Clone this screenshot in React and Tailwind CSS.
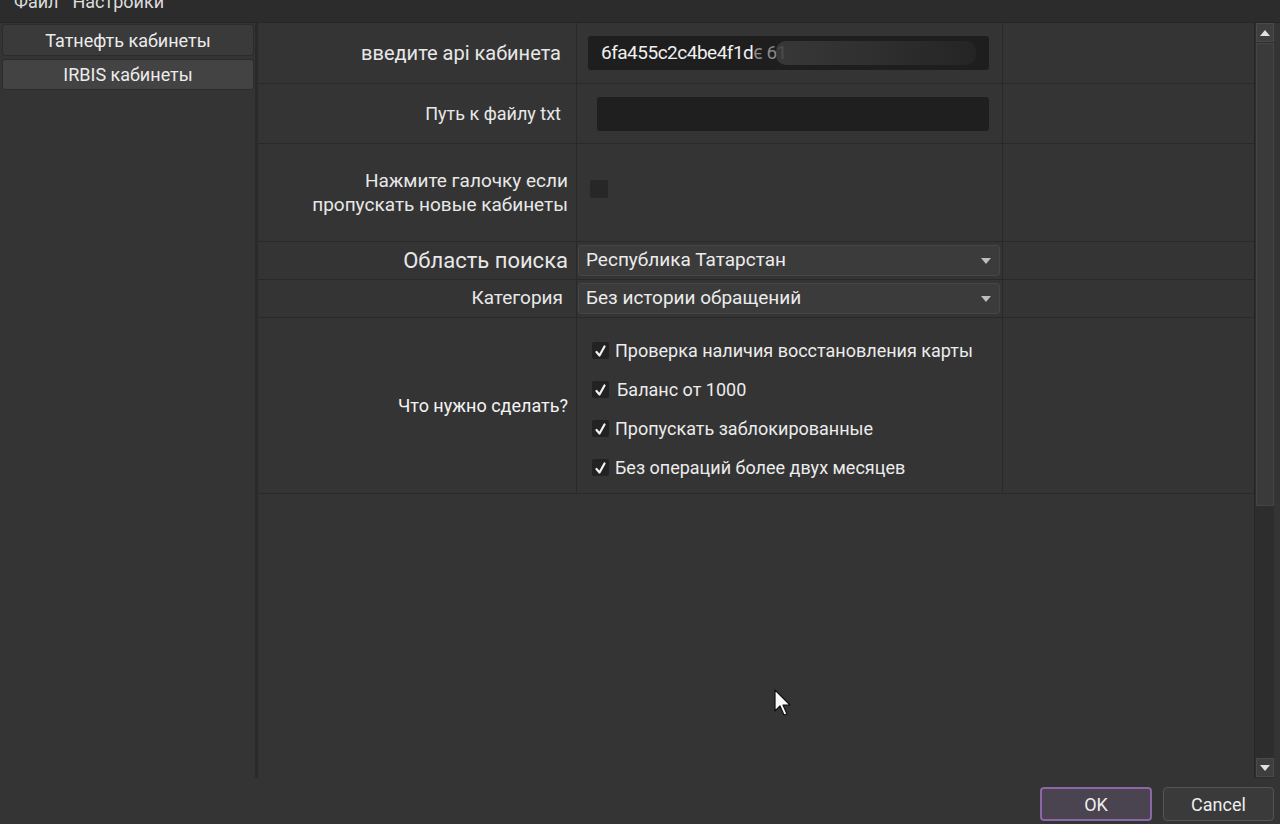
import React from 'react';

const font = { fontFamily: 'Roboto, "Noto Sans", sans-serif' };

function Check() {
  return (
    <span className="w-[17px] h-[17px] bg-[#222] rounded-[2px] flex items-center justify-center shrink-0">
      <svg width="11" height="12" viewBox="0 0 11 12">
        <path d="M1.5 7 L4.5 10.5 L9.5 1.5" fill="none" stroke="#f2f2f2" strokeWidth="2.2" strokeLinecap="round" strokeLinejoin="round" />
      </svg>
    </span>
  );
}

function Combo({ text }) {
  return (
    <div className="w-[422px] h-[31px] bg-[#3b3b3b] border border-[#464646] rounded-[3px] flex items-center justify-between pl-[7px] pr-[8px] text-[19px] text-[#ececec]">
      <span>{text}</span>
      <svg width="10" height="6" viewBox="0 0 10 6"><path d="M0 0 L10 0 L5 6 Z" fill="#bdbdbd" /></svg>
    </div>
  );
}

function Row({ h, label, children, align = 'items-center' }) {
  return (
    <div className={`flex ${h} border-b border-[#292929]`}>
      <div className="w-[319px] shrink-0 border-r border-[#292929] flex items-center justify-end pr-[8px] text-right text-[#e8e8e8]">
        {label}
      </div>
      <div className={`w-[426px] shrink-0 border-r border-[#292929] flex ${align}`}>{children}</div>
      <div className="flex-1" />
    </div>
  );
}

export default function App() {
  return (
    <div className="w-[1280px] h-[824px] bg-[#343434] flex flex-col overflow-hidden relative" style={font}>
      <div className="h-[23px] bg-[#2c2c2c] border-b border-[#262626] flex items-start gap-[14px] pl-[14px] text-[18px] leading-[22px] text-[#dcdcdc] overflow-hidden">
        <span className="-mt-[9px]">Файл</span>
        <span className="-mt-[9px]">Настройки</span>
      </div>

      <div className="flex h-[755px]">
        <div className="w-[258px] shrink-0 pl-[2px] pr-[1px] pt-[1px] flex flex-col gap-[3px] border-r-[3px] border-[#2a2a2a]">
          <div className="h-[32px] bg-[#3a3a3a] border border-[#2b2b2b] rounded-[3px] flex items-center justify-center text-[18px] text-[#ececec]">Татнефть кабинеты</div>
          <div className="h-[31px] bg-[#434343] border border-[#2b2b2b] rounded-[3px] flex items-center justify-center text-[18px] text-[#ececec]">IRBIS кабинеты</div>
        </div>

        <div className="flex-1 flex flex-col">
          <Row h="h-[61px]" label={<span className="text-[20px] pr-[7px]">введите api кабинета</span>}>
            <div className="ml-[11px] w-[401px] h-[34px] bg-[#1e1e1e] rounded-[3px] flex items-center pl-[13px] text-[19px] tracking-[-0.5px] text-[#f0f0f0] relative overflow-hidden">
              <span>6fa455c2c4be4f1d</span>
              <span className="text-[#8a8a8a]">ϵ 61</span>
              <span className="absolute left-[188px] top-[5px] w-[200px] h-[24px] bg-gradient-to-r from-[#3e3e3e] via-[#333] to-[#262626] rounded-[10px] opacity-80" />
            </div>
          </Row>
          <Row h="h-[60px]" label={<span className="text-[18px] pr-[7px]">Путь к файлу txt</span>}>
            <div className="ml-[20px] w-[392px] h-[34px] bg-[#1f1f1f] rounded-[3px]" />
          </Row>
          <Row h="h-[98px]" label={<span className="text-[19px] leading-[24px]">Нажмите галочку если<br />пропускать новые кабинеты</span>}>
            <div className="ml-[13px] -mt-[8px] w-[18px] h-[18px] bg-[#272727] rounded-[2px]" />
          </Row>
          <Row h="h-[38px]" label={<span className="text-[22px]">Область поиска</span>}>
            <div className="ml-[1px]"><Combo text="Республика Татарстан" /></div>
          </Row>
          <Row h="h-[38px]" label={<span className="text-[19px] pr-[5px]">Категория</span>}>
            <div className="ml-[1px]"><Combo text="Без истории обращений" /></div>
          </Row>
          <Row h="h-[176px]" align="items-start" label={<span className="text-[18px] text-[#f4f4f4]">Что нужно сделать?</span>}>
            <div className="ml-[15px] flex flex-col gap-[18px] pt-[22px] text-[18px] leading-[21px] text-[#ececec]">
              <div className="flex items-center gap-[6px]"><Check /><span>Проверка наличия восстановления карты</span></div>
              <div className="flex items-center gap-[8px]"><Check /><span>Баланс от 1000</span></div>
              <div className="flex items-center gap-[6px]"><Check /><span>Пропускать заблокированные</span></div>
              <div className="flex items-center gap-[6px]"><Check /><span>Без операций более двух месяцев</span></div>
            </div>
          </Row>
          <div className="flex-1" />
        </div>

        <div className="w-[20px] mr-[6px] shrink-0 bg-[#2d2d2d] border-l border-[#262626] flex flex-col items-center pb-[1px]">
          <div className="w-[18px] h-[19px] bg-[#3e3e3e] border border-[#4a4a4a] flex items-center justify-center">
            <svg width="10" height="6" viewBox="0 0 10 6"><path d="M0 6 L10 6 L5 0 Z" fill="#e0e0e0" /></svg>
          </div>
          <div className="w-[18px] h-[463px] bg-[#3a3a3a] border border-[#454545] mt-[1px]" />
          <div className="flex-1" />
          <div className="w-[18px] h-[19px] bg-[#3e3e3e] border border-[#4a4a4a] flex items-center justify-center">
            <svg width="10" height="6" viewBox="0 0 10 6"><path d="M0 0 L10 0 L5 6 Z" fill="#e0e0e0" /></svg>
          </div>
        </div>
      </div>

      <div className="flex-1 flex items-center justify-end gap-[11px] pr-[6px] pt-[6px]">
        <div className="w-[112px] h-[34px] bg-[#4a4350] border-2 border-[#8d66a8] rounded-[4px] flex items-center justify-center text-[18px] text-[#eeeeee]">OK</div>
        <div className="w-[111px] h-[34px] bg-[#3a3a3a] border border-[#555] rounded-[4px] flex items-center justify-center text-[18px] text-[#eeeeee]">Cancel</div>
      </div>

      <svg className="absolute left-[774px] top-[689px]" width="18" height="28" viewBox="0 0 18 28">
        <path d="M1 1 L1 22 L6 17 L10 26 L13 25 L9 16 L16 16 Z" fill="#fafafa" stroke="#111" strokeWidth="1.2" strokeLinejoin="round" />
      </svg>
    </div>
  );
}
